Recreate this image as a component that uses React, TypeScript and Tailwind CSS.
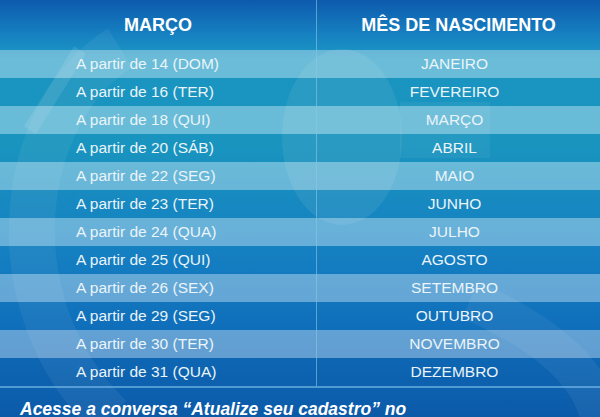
const rows: [string, string][] = [
  ["A partir de 14 (DOM)", "JANEIRO"],
  ["A partir de 16 (TER)", "FEVEREIRO"],
  ["A partir de 18 (QUI)", "MARÇO"],
  ["A partir de 20 (SÁB)", "ABRIL"],
  ["A partir de 22 (SEG)", "MAIO"],
  ["A partir de 23 (TER)", "JUNHO"],
  ["A partir de 24 (QUA)", "JULHO"],
  ["A partir de 25 (QUI)", "AGOSTO"],
  ["A partir de 26 (SEX)", "SETEMBRO"],
  ["A partir de 29 (SEG)", "OUTUBRO"],
  ["A partir de 30 (TER)", "NOVEMBRO"],
  ["A partir de 31 (QUA)", "DEZEMBRO"],
];

function Decor() {
  return (
    <svg className="pointer-events-none absolute inset-0" width="600" height="417" viewBox="0 0 600 417">
      <ellipse cx="342" cy="137" rx="60" ry="88" fill="#ffffff" fillOpacity="0.08" />
      <path d="M120 48 C 20 110, -10 300, 110 417" fill="none" stroke="#ffffff" strokeOpacity="0.06" strokeWidth="46" />
      <path d="M80 50 L 30 130" stroke="#ffffff" strokeOpacity="0.1" strokeWidth="14" />
      <path d="M470 300 C 540 330, 590 370, 600 417" fill="none" stroke="#ffffff" strokeOpacity="0.06" strokeWidth="40" />
      <rect x="400" y="102" width="90" height="56" fill="#ffffff" fillOpacity="0.05" />
    </svg>
  );
}

export default function App() {
  return (
    <div className="relative h-[417px] w-[600px] overflow-hidden bg-[linear-gradient(180deg,#0d5aad_0%,#1784c2_9%,#1b98c3_14%,#1a98c2_35%,#1683c5_60%,#0f6fbd_80%,#0b5aa8_100%)] font-['Liberation_Sans',Arial,sans-serif] text-[#eaf4f9]">
      <Decor />
      <div className="relative">
        <div className="grid h-[50px] grid-cols-[317px_1fr] text-[18px] font-bold text-white">
          <div className="flex items-center justify-center border-r border-[#8cc6e4]/60">MARÇO</div>
          <div className="flex items-center justify-center">MÊS DE NASCIMENTO</div>
        </div>
        {rows.map(([day, month], i) => (
          <div
            key={month}
            className={`grid h-[28px] grid-cols-[317px_1fr] text-[15.5px] ${i % 2 === 0 ? "bg-white/35" : "bg-[#0a4f90]/5"}`}
          >
            <div className="flex items-center border-r border-[#8cc6e4]/60 pl-[76px]">{day}</div>
            <div className="flex items-center justify-center pr-[8px]">{month}</div>
          </div>
        ))}
        <div className="h-[2px] bg-[#6fb3e2]/70" />
        <p className="pl-[20px] pt-[8px] text-[17.5px] font-bold italic text-white">
          Acesse a conversa “Atualize seu cadastro” no
        </p>
      </div>
    </div>
  );
}
